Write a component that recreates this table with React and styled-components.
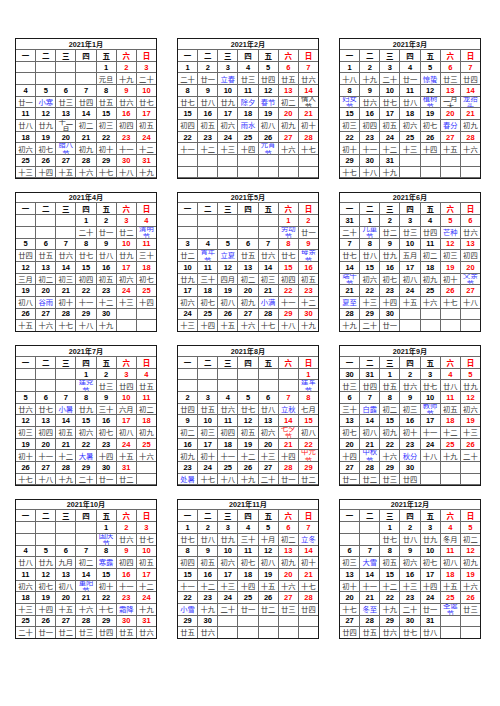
import React from "react";
import styled, { createGlobalStyle } from "styled-components";

const GlobalStyle = createGlobalStyle`
  html, body { margin: 0; padding: 0; background: #fff; }
  body { font-family: "Liberation Sans", "Noto Sans CJK SC", sans-serif; }
`;

const Page = styled.div`
  display: grid;
  grid-template-columns: repeat(3, 142px);
  grid-auto-rows: 140.5px;
  align-content: start;
  column-gap: 20px;
  row-gap: 13px;
  padding: 38px 0 0 15px;
  width: 500px;
  height: 706px;
  box-sizing: border-box;
`;

const MonthTable = styled.div`
  width: 142px;
  height: 140.5px;
  align-self: start;
  box-sizing: border-box;
  border: 1.5px solid #1a1a1a;
  display: grid;
  grid-template-columns: repeat(7, 1fr);
  grid-template-rows: 9.7px 11px repeat(10, 1fr);
  gap: 1px;
  background: #6a6a6a;
`;

const Title = styled.div`
  grid-column: 1 / -1;
  background: #fff;
  display: flex;
  align-items: center;
  justify-content: center;
  font-weight: bold;
  font-size: 7.2px;
  color: #111;
`;

const HeadCell = styled.div`
  background: #fff;
  display: flex;
  align-items: center;
  justify-content: center;
  font-family: "Noto Sans CJK SC", sans-serif;
  font-weight: bold;
  font-size: 7.5px;
  color: ${(p) => (p.$weekend ? "#ff0000" : "#111")};
`;

const DateCell = styled.div`
  background: #fff;
  display: flex;
  align-items: center;
  justify-content: center;
  font-weight: bold;
  font-size: 7.5px;
  color: ${(p) => (p.$weekend ? "#ff0000" : "#000")};
`;

const toneColor = { b: "#3535ff", r: "#ff2020", g: "#333" };

const LunarCell = styled.div`
  background: #fff;
  display: flex;
  align-items: center;
  justify-content: center;
  overflow: hidden;
  min-height: 0;
  font-family: "Noto Sans CJK SC", sans-serif;
  font-size: 7.3px;
  line-height: 1.15;
  text-align: center;
  color: ${(p) => toneColor[p.$tone] || "#333"};
`;

const LunarText = styled.span`
  display: block;
  width: 100%;
  word-break: break-all;
`;

const DAY = 86400000;
const utc = (y, m, d) => Date.UTC(y, m, d);

const lunarStarts = [
  { t: utc(2020, 11, 15), name: "十一月" },
  { t: utc(2021, 0, 13), name: "十二月" },
  { t: utc(2021, 1, 12), name: "正月" },
  { t: utc(2021, 2, 13), name: "二月大" },
  { t: utc(2021, 3, 12), name: "三月" },
  { t: utc(2021, 4, 12), name: "四月" },
  { t: utc(2021, 5, 10), name: "五月" },
  { t: utc(2021, 6, 10), name: "六月" },
  { t: utc(2021, 7, 8), name: "七月" },
  { t: utc(2021, 8, 7), name: "八月" },
  { t: utc(2021, 9, 6), name: "九月" },
  { t: utc(2021, 10, 5), name: "十月" },
  { t: utc(2021, 11, 4), name: "冬月" },
];

const dayNames = [
  "", "初一", "初二", "初三", "初四", "初五", "初六", "初七", "初八", "初九", "初十",
  "十一", "十二", "十三", "十四", "十五", "十六", "十七", "十八", "十九", "二十",
  "廿一", "廿二", "廿三", "廿四", "廿五", "廿六", "廿七", "廿八", "廿九", "三十",
];

const labels = {
  "1-1": ["元旦", "g"], "1-5": ["小寒", "b"], "1-20": ["腊八节", "b"],
  "2-3": ["立春", "b"], "2-11": ["除夕", "b"], "2-12": ["春节", "b"], "2-14": ["情人节", "g"],
  "2-18": ["雨水", "b"], "2-26": ["元宵节", "b"],
  "3-5": ["惊蛰", "b"], "3-8": ["妇女节", "b"], "3-12": ["植树节", "b"], "3-14": ["龙抬头", "b"], "3-20": ["春分", "b"],
  "4-4": ["清明节", "b"], "4-20": ["谷雨", "b"],
  "5-1": ["劳动节", "b"], "5-4": ["青年节", "b"], "5-5": ["立夏", "b"], "5-9": ["母亲节", "b"], "5-21": ["小满", "b"],
  "6-1": ["儿童节", "b"], "6-5": ["芒种", "b"], "6-14": ["端午节", "b"], "6-20": ["父亲节", "b"], "6-21": ["夏至", "b"],
  "7-1": ["建党节", "b"], "7-7": ["小暑", "b"], "7-22": ["大暑", "b"],
  "8-1": ["建军节", "b"], "8-7": ["立秋", "b"], "8-14": ["七夕节", "r"], "8-22": ["中元节", "r"], "8-23": ["处暑", "b"],
  "9-7": ["白露", "b"], "9-10": ["教师节", "b"], "9-21": ["中秋节", "b"], "9-23": ["秋分", "b"],
  "10-1": ["国庆节", "b"], "10-8": ["寒露", "b"], "10-14": ["重阳节", "b"], "10-23": ["霜降", "b"],
  "11-7": ["立冬", "b"], "11-22": ["小雪", "b"],
  "12-7": ["大雪", "b"], "12-21": ["冬至", "b"], "12-25": ["圣诞节", "b"],
};

function lunarOf(t) {
  let s = lunarStarts[0];
  for (const x of lunarStarts) if (x.t <= t) s = x;
  const n = Math.round((t - s.t) / DAY) + 1;
  return n === 1 ? s.name : dayNames[n];
}

function gridStart(y, m) {
  const first = utc(y, m, 1);
  const dow = (new Date(first).getUTCDay() + 6) % 7;
  return first - dow * DAY;
}

function buildMonth(m) {
  const start = gridStart(2021, m);
  const prevEnd = gridStart(2021, m - 1) + 34 * DAY;
  const prevMonth = new Date(utc(2021, m - 1, 1)).getUTCMonth();
  const weeks = [];
  for (let w = 0; w < 5; w++) {
    const row = [];
    for (let i = 0; i < 7; i++) {
      const t = start + (w * 7 + i) * DAY;
      const dt = new Date(t);
      const mm = dt.getUTCMonth();
      const show = mm === m || (mm === prevMonth && t > prevEnd && dt.getUTCFullYear() === 2021);
      if (!show) {
        row.push(null);
      } else {
        const key = `${mm + 1}-${dt.getUTCDate()}`;
        const lab = labels[key];
        row.push({
          d: dt.getUTCDate(),
          lunar: lab ? lab[0] : lunarOf(t),
          tone: lab ? lab[1] : "g",
          weekend: i >= 5,
        });
      }
    }
    weeks.push(row);
  }
  return weeks;
}

const heads = ["一", "二", "三", "四", "五", "六", "日"];

function Month({ m }) {
  const weeks = buildMonth(m);
  return (
    <MonthTable>
      <Title>2021年{m + 1}月</Title>
      {heads.map((h, i) => (
        <HeadCell key={h} $weekend={i >= 5}>{h}</HeadCell>
      ))}
      {weeks.map((row, w) => (
        <React.Fragment key={w}>
          {row.map((c, i) => (
            <DateCell key={`d${i}`} $weekend={i >= 5}>{c ? c.d : ""}</DateCell>
          ))}
          {row.map((c, i) => (
            <LunarCell key={`l${i}`} $tone={c ? c.tone : "g"}>
              <LunarText>{c ? c.lunar : ""}</LunarText>
            </LunarCell>
          ))}
        </React.Fragment>
      ))}
    </MonthTable>
  );
}

export default function App() {
  return (
    <>
      <GlobalStyle />
      <Page>
        {Array.from({ length: 12 }, (_, m) => (
          <Month key={m} m={m} />
        ))}
      </Page>
    </>
  );
}
